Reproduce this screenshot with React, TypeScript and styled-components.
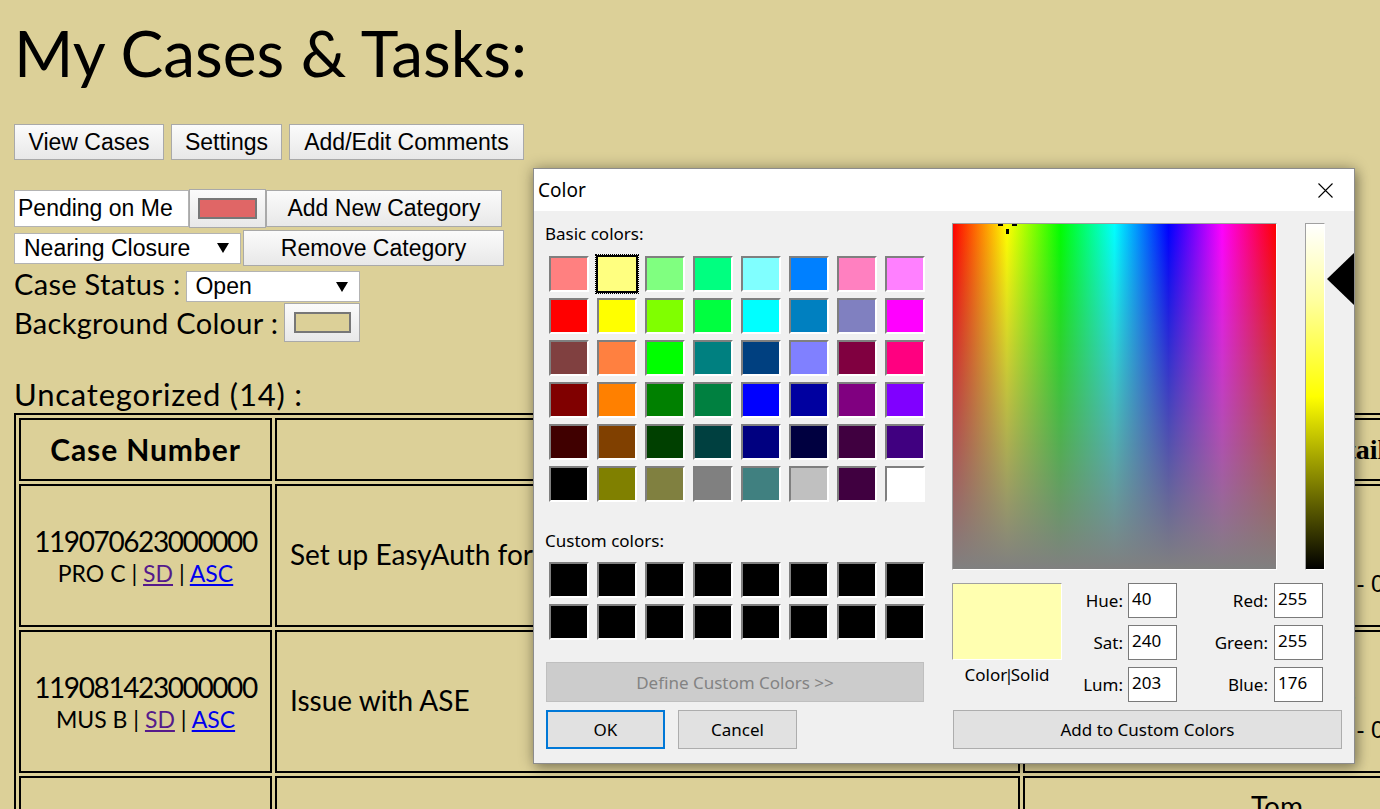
import React from "react";
import styled, { createGlobalStyle, css } from "styled-components";

const PAGE_BG = "#dcd098";

const GlobalStyle = createGlobalStyle`
  html, body { margin: 0; padding: 0; background: ${PAGE_BG}; overflow: hidden; }
  #root { width: 1380px; height: 809px; overflow: hidden; }
`;

const Page = styled.div`
  position: relative;
  width: 1380px;
  height: 809px;
  overflow: hidden;
  box-sizing: border-box;
  padding-left: 14px;
  display: flex;
  flex-direction: column;
  align-items: flex-start;
  font-family: Lato, "Liberation Sans", sans-serif;
  color: #000;
`;

const Title = styled.h1`
  margin: 13px 0 0;
  font-size: 64px;
  font-weight: 400;
  line-height: 80px;
  white-space: nowrap;
`;

const ControlRow = styled.div<{ $mt: number; $gap?: number }>`
  display: flex;
  align-items: center;
  gap: ${(p) => p.$gap ?? 0}px;
  margin-top: ${(p) => p.$mt}px;
`;

const PlainButton = styled.button<{ $w: number; $h?: number; $ml?: number }>`
  box-sizing: border-box;
  width: ${(p) => p.$w}px;
  height: ${(p) => p.$h ?? 36}px;
  margin: 0 0 0 ${(p) => p.$ml ?? 0}px;
  padding: 0;
  font: 23px "Liberation Sans", Arial, sans-serif;
  color: #000;
  background: linear-gradient(#fbfbfb, #e8e8e8);
  border: 1px solid #a9a9a9;
  border-radius: 0;
  display: flex;
  align-items: center;
  justify-content: center;
`;

const TextField = styled.input<{ $w: number }>`
  box-sizing: border-box;
  width: ${(p) => p.$w}px;
  height: 37px;
  margin: 0;
  padding: 0 0 0 3px;
  border: 1px solid #b3b3b3;
  background: #fff;
  font: 23px "Liberation Sans", Arial, sans-serif;
  color: #000;
  outline: none;
`;

const ColorWell = styled.button<{ $w: number; $h: number }>`
  box-sizing: border-box;
  width: ${(p) => p.$w}px;
  height: ${(p) => p.$h}px;
  margin: 0;
  padding: 0;
  background: linear-gradient(#fbfbfb, #e8e8e8);
  border: 1px solid #a9a9a9;
  border-radius: 0;
  display: flex;
  align-items: center;
  justify-content: center;
`;

const WellSwatch = styled.span<{ $c: string; $w: number }>`
  box-sizing: border-box;
  display: block;
  width: ${(p) => p.$w}px;
  height: 21px;
  background: ${(p) => p.$c};
  border: 2px solid #777;
`;

const SelectBox = styled.div<{ $w: number; $pl: number }>`
  box-sizing: border-box;
  width: ${(p) => p.$w}px;
  height: 31px;
  background: #fff;
  border: 1px solid #b3b3b3;
  display: flex;
  align-items: center;
  justify-content: space-between;
  padding: 0 11px 0 ${(p) => p.$pl}px;
  font: 23px "Liberation Sans", Arial, sans-serif;
  white-space: nowrap;
`;

const Caret = styled.span`
  width: 0;
  height: 0;
  border-left: 6px solid transparent;
  border-right: 6px solid transparent;
  border-top: 10px solid #000;
`;

const FieldLabel = styled.span<{ $raise?: number }>`
  font-size: 29px;
  line-height: 30px;
  letter-spacing: 0.3px;
  margin-top: ${(p) => -(p.$raise ?? 0)}px;
  white-space: nowrap;
`;

const SectionHeading = styled.h3`
  margin: 37px 0 4px;
  font-size: 31px;
  font-weight: 400;
  line-height: 30px;
  letter-spacing: 0.8px;
  white-space: nowrap;
`;

const CaseTable = styled.table`
  border: 2px solid #000;
  border-spacing: 3px;
  border-collapse: separate;
  flex: none;
`;

const HeadCell = styled.th<{ $w: number; $serif?: boolean }>`
  box-sizing: border-box;
  width: ${(p) => p.$w}px;
  min-width: ${(p) => p.$w}px;
  height: 63px;
  border: 2px solid #000;
  padding: 0 0 2px;
  text-align: center;
  vertical-align: middle;
  font-size: 30px;
  font-weight: 700;
  letter-spacing: 0.9px;
  white-space: nowrap;
  ${(p) =>
    p.$serif &&
    css`
      font-family: "Liberation Serif", "Times New Roman", serif;
      font-size: 28px;
      letter-spacing: 0;
      padding: 0;
    `}
`;

const BodyCell = styled.td<{ $h: number; $align?: string; $pl?: number; $top?: boolean; $lift?: number }>`
  box-sizing: border-box;
  height: ${(p) => p.$h}px;
  border: 2px solid #000;
  padding: ${(p) => (p.$top ? 11 : 0)}px 0 ${(p) => p.$lift ?? 0}px ${(p) => p.$pl ?? 0}px;
  text-align: ${(p) => p.$align ?? "left"};
  vertical-align: ${(p) => (p.$top ? "top" : "middle")};
  white-space: nowrap;
`;

const CaseNo = styled.div`
  font-size: 28px;
  line-height: 36px;
  letter-spacing: -1.4px;
`;

const CaseMeta = styled.div`
  font-size: 23px;
  line-height: 28px;
`;

const CaseLink = styled.a<{ $visited?: boolean }>`
  color: ${(p) => (p.$visited ? "#551a8b" : "#0000ee")};
  text-decoration: underline;
`;

const CaseTitle = styled.div`
  font-size: 28px;
  line-height: 34px;
`;

const InfoLine = styled.div<{ $big?: boolean }>`
  font: ${(p) => (p.$big ? "28px/34px Lato, sans-serif" : "24px/28px 'Liberation Sans', Arial, sans-serif")};
`;

/* ---------- Color dialog ---------- */

const Dialog = styled.div`
  position: absolute;
  left: 533px;
  top: 168px;
  width: 822px;
  height: 596px;
  box-sizing: border-box;
  border: 1px solid #8c8c8c;
  background: #f0f0f0;
  box-shadow: 0 0 14px rgba(0, 0, 0, 0.32), 3px 5px 10px rgba(0, 0, 0, 0.22);
  display: flex;
  flex-direction: column;
  overflow: hidden;
  font-family: "Noto Sans", "Open Sans", sans-serif;
  font-size: 17px;
  color: #000;
`;

const TitleBar = styled.div`
  flex: none;
  height: 42px;
  background: #fff;
  display: flex;
  align-items: center;
  justify-content: space-between;
  padding: 0 21px 0 4px;
  font-size: 19px;
`;

const DialogBody = styled.div`
  flex: 1;
  display: flex;
  padding: 11px 0 0 11px;
`;

const LeftPane = styled.div`
  width: 407px;
  flex: none;
  display: flex;
  flex-direction: column;
  align-items: flex-start;
`;

const PaneLabel = styled.div<{ $mt?: number }>`
  margin-top: ${(p) => p.$mt ?? 0}px;
  line-height: 23px;
`;

const SwatchGrid = styled.div<{ $mt: number }>`
  display: grid;
  grid-template-columns: repeat(8, 40px);
  grid-auto-rows: 36px;
  column-gap: 8px;
  row-gap: 6px;
  margin: ${(p) => p.$mt}px 0 0 4px;
`;

const Swatch = styled.div<{ $c: string; $sel?: boolean }>`
  box-sizing: border-box;
  background: ${(p) => p.$c};
  border: 2px solid;
  border-color: #7f7f7f #ffffff #ffffff #7f7f7f;
  ${(p) =>
    p.$sel &&
    css`
      border: 1px solid #000;
      box-shadow: 0 0 0 1px #000;
      outline: 1px dotted #000;
      outline-offset: 1px;
    `}
`;

const DlgButton = styled.button<{ $w: number; $h: number; $mt?: number; $ml?: number; $primary?: boolean; $off?: boolean }>`
  box-sizing: border-box;
  width: ${(p) => p.$w}px;
  height: ${(p) => p.$h}px;
  margin: ${(p) => p.$mt ?? 0}px 0 0 ${(p) => p.$ml ?? 0}px;
  padding: 0;
  background: #e1e1e1;
  border: 1px solid #adadad;
  border-radius: 0;
  font: 17px "Noto Sans", "Open Sans", sans-serif;
  color: #000;
  ${(p) =>
    p.$primary &&
    css`
      border: 2px solid #0078d7;
    `}
  ${(p) =>
    p.$off &&
    css`
      background: #cccccc;
      border-color: #bfbfbf;
      color: #838383;
    `}
`;

const ActionRow = styled.div`
  display: flex;
  margin-top: 8px;
`;

const RightPane = styled.div`
  display: flex;
  flex-direction: column;
  align-items: flex-start;
`;

const PickerRow = styled.div`
  display: flex;
  align-items: flex-start;
  margin-top: 1px;
`;

const Spectrum = styled.div`
  position: relative;
  box-sizing: border-box;
  width: 325px;
  height: 347px;
  border: 1px solid;
  border-color: #a0a0a0 #ffffff #ffffff #a0a0a0;
  background: linear-gradient(to bottom, rgba(128, 128, 128, 0) 0%, rgba(128, 128, 128, 1) 100%),
    linear-gradient(
      to right,
      #ff0000 0%,
      #ffff00 16.7%,
      #00ff00 33.3%,
      #00ffff 50%,
      #0000ff 66.7%,
      #ff00ff 83.3%,
      #ff0000 100%
    );
`;

const CrossMark = styled.span<{ $x: number; $y: number; $w: number; $h: number }>`
  position: absolute;
  left: ${(p) => p.$x}px;
  top: ${(p) => p.$y}px;
  width: ${(p) => p.$w}px;
  height: ${(p) => p.$h}px;
  background: #000;
`;

const LumBar = styled.div`
  box-sizing: border-box;
  width: 20px;
  height: 347px;
  margin-left: 28px;
  border: 1px solid;
  border-color: #a0a0a0 #ffffff #ffffff #a0a0a0;
  background: linear-gradient(to bottom, #ffffff 0%, #ffffa0 22%, #ffff00 50%, #808000 75%, #000000 100%);
`;

const LumArrow = styled.div`
  width: 0;
  height: 0;
  margin: 29px 0 0 2px;
  border-top: 27px solid transparent;
  border-bottom: 27px solid transparent;
  border-right: 28px solid #000;
`;

const ValueRow = styled.div`
  display: flex;
  align-items: flex-start;
  margin-top: 13px;
`;

const PreviewCol = styled.div`
  width: 110px;
  display: flex;
  flex-direction: column;
  align-items: center;
`;

const PreviewBox = styled.div<{ $c: string }>`
  box-sizing: border-box;
  width: 110px;
  height: 77px;
  background: ${(p) => p.$c};
  border: 1px solid;
  border-color: #a0a0a0 #ffffff #ffffff #a0a0a0;
`;

const PreviewLabel = styled.div`
  margin-top: 3px;
  line-height: 23px;
  white-space: nowrap;
`;

const Pipe = styled.span`
  margin: 0 -3px;
`;

const FieldGrid = styled.div<{ $lw: number; $gap: number }>`
  display: grid;
  grid-template-columns: ${(p) => p.$lw}px 49px;
  grid-auto-rows: 35px;
  column-gap: ${(p) => p.$gap}px;
  row-gap: 7px;
  margin-left: 5px;
  align-items: center;
`;

const DlgLabel = styled.span`
  text-align: right;
  line-height: 23px;
`;

const DlgInput = styled.div`
  box-sizing: border-box;
  height: 35px;
  border: 1px solid #7a7a7a;
  background: #fff;
  padding: 3px 0 0 3px;
  line-height: 23px;
`;

const basic = [
  ["#ff8080", "#ffff80", "#80ff80", "#00ff80", "#80ffff", "#0080ff", "#ff80c0", "#ff80ff"],
  ["#ff0000", "#ffff00", "#80ff00", "#00ff40", "#00ffff", "#0080c0", "#8080c0", "#ff00ff"],
  ["#804040", "#ff8040", "#00ff00", "#008080", "#004080", "#8080ff", "#800040", "#ff0080"],
  ["#800000", "#ff8000", "#008000", "#008040", "#0000ff", "#0000a0", "#800080", "#8000ff"],
  ["#400000", "#804000", "#004000", "#004040", "#000080", "#000040", "#400040", "#400080"],
  ["#000000", "#808000", "#808040", "#808080", "#408080", "#c0c0c0", "#400040", "#ffffff"],
];

const CloseIcon = () => (
  <svg width="15" height="15" viewBox="0 0 15 15">
    <path d="M0.5 0.5 L14.5 14.5 M14.5 0.5 L0.5 14.5" stroke="#000" strokeWidth="1.1" fill="none" />
  </svg>
);

const ColorDialog = () => (
  <Dialog>
    <TitleBar>
      <span>Color</span>
      <CloseIcon />
    </TitleBar>
    <DialogBody>
      <LeftPane>
        <PaneLabel>Basic colors:</PaneLabel>
        <SwatchGrid $mt={11}>
          {basic.flatMap((row, r) =>
            row.map((c, i) => <Swatch key={`${r}-${i}`} $c={c} $sel={r === 0 && i === 1} />)
          )}
        </SwatchGrid>
        <PaneLabel $mt={27}>Custom colors:</PaneLabel>
        <SwatchGrid $mt={10}>
          {Array.from({ length: 16 }).map((_, i) => (
            <Swatch key={i} $c="#000000" />
          ))}
        </SwatchGrid>
        <DlgButton $w={378} $h={40} $mt={22} $ml={1} $off>
          Define Custom Colors &gt;&gt;
        </DlgButton>
        <ActionRow>
          <DlgButton $w={119} $h={39} $ml={1} $primary>
            OK
          </DlgButton>
          <DlgButton $w={119} $h={39} $ml={13}>
            Cancel
          </DlgButton>
        </ActionRow>
      </LeftPane>
      <RightPane>
        <PickerRow>
          <Spectrum>
            <CrossMark $x={45} $y={0} $w={5} $h={2} />
            <CrossMark $x={59} $y={0} $w={5} $h={2} />
            <CrossMark $x={53} $y={5} $w={3} $h={5} />
          </Spectrum>
          <LumBar />
          <LumArrow />
        </PickerRow>
        <ValueRow>
          <PreviewCol>
            <PreviewBox $c="#ffffb0" />
            <PreviewLabel>
              Color<Pipe>|</Pipe>Solid
            </PreviewLabel>
          </PreviewCol>
          <FieldGrid $lw={56} $gap={5}>
            <DlgLabel>Hue:</DlgLabel>
            <DlgInput>40</DlgInput>
            <DlgLabel>Sat:</DlgLabel>
            <DlgInput>240</DlgInput>
            <DlgLabel>Lum:</DlgLabel>
            <DlgInput>203</DlgInput>
          </FieldGrid>
          <FieldGrid $lw={86} $gap={6}>
            <DlgLabel>Red:</DlgLabel>
            <DlgInput>255</DlgInput>
            <DlgLabel>Green:</DlgLabel>
            <DlgInput>255</DlgInput>
            <DlgLabel>Blue:</DlgLabel>
            <DlgInput>176</DlgInput>
          </FieldGrid>
        </ValueRow>
        <DlgButton $w={389} $h={39} $mt={8} $ml={1}>
          Add to Custom Colors
        </DlgButton>
      </RightPane>
    </DialogBody>
  </Dialog>
);

export default function App() {
  return (
    <>
      <GlobalStyle />
      <Page>
        <Title>My Cases &amp; Tasks:</Title>

        <ControlRow $mt={31}>
          <PlainButton $w={150}>View Cases</PlainButton>
          <PlainButton $w={111} $ml={7}>Settings</PlainButton>
          <PlainButton $w={235} $ml={7}>Add/Edit Comments</PlainButton>
        </ControlRow>

        <ControlRow $mt={29}>
          <TextField $w={175} defaultValue="Pending on Me" />
          <ColorWell $w={77} $h={39}>
            <WellSwatch $c="#e06666" $w={59} />
          </ColorWell>
          <PlainButton $w={236} $h={37}>Add New Category</PlainButton>
        </ControlRow>

        <ControlRow $mt={2}>
          <SelectBox $w={227} $pl={9}>
            Nearing Closure
            <Caret />
          </SelectBox>
          <PlainButton $w={261} $ml={2}>Remove Category</PlainButton>
        </ControlRow>

        <ControlRow $mt={5} $gap={6}>
          <FieldLabel $raise={6}>Case Status :</FieldLabel>
          <SelectBox $w={174} $pl={8}>
            Open
            <Caret />
          </SelectBox>
        </ControlRow>

        <ControlRow $mt={1} $gap={6}>
          <FieldLabel>Background Colour :</FieldLabel>
          <ColorWell $w={76} $h={39}>
            <WellSwatch $c={PAGE_BG} $w={57} />
          </ColorWell>
        </ControlRow>

        <SectionHeading>Uncategorized (14) :</SectionHeading>

        <CaseTable>
          <thead>
            <tr>
              <HeadCell $w={253}>Case Number</HeadCell>
              <HeadCell $w={745}>Title</HeadCell>
              <HeadCell $w={664} $serif>
                Details
              </HeadCell>
            </tr>
          </thead>
          <tbody>
            <tr>
              <BodyCell $h={143} $align="center" $lift={2}>
                <CaseNo>119070623000000</CaseNo>
                <CaseMeta>
                  PRO C | <CaseLink $visited>SD</CaseLink> | <CaseLink>ASC</CaseLink>
                </CaseMeta>
              </BodyCell>
              <BodyCell $h={143} $pl={13} $lift={3}>
                <CaseTitle>Set up EasyAuth for App Service</CaseTitle>
              </BodyCell>
              <BodyCell $h={143} $pl={226}>
                <InfoLine>Tom</InfoLine>
                <InfoLine>Open</InfoLine>
                <InfoLine>Days idle - 0</InfoLine>
              </BodyCell>
            </tr>
            <tr>
              <BodyCell $h={143} $align="center" $lift={2}>
                <CaseNo>119081423000000</CaseNo>
                <CaseMeta>
                  MUS B | <CaseLink $visited>SD</CaseLink> | <CaseLink>ASC</CaseLink>
                </CaseMeta>
              </BodyCell>
              <BodyCell $h={143} $pl={13} $lift={3}>
                <CaseTitle>Issue with ASE</CaseTitle>
              </BodyCell>
              <BodyCell $h={143} $pl={226}>
                <InfoLine>Tom</InfoLine>
                <InfoLine>Customer</InfoLine>
                <InfoLine>Days idle - 0</InfoLine>
              </BodyCell>
            </tr>
            <tr>
              <BodyCell $h={200} $align="center" $top>
                <CaseNo>&nbsp;</CaseNo>
              </BodyCell>
              <BodyCell $h={200} $pl={13} $top>
                &nbsp;
              </BodyCell>
              <BodyCell $h={200} $pl={226} $top>
                <InfoLine $big>Tom</InfoLine>
              </BodyCell>
            </tr>
          </tbody>
        </CaseTable>

        <ColorDialog />
      </Page>
    </>
  );
}
